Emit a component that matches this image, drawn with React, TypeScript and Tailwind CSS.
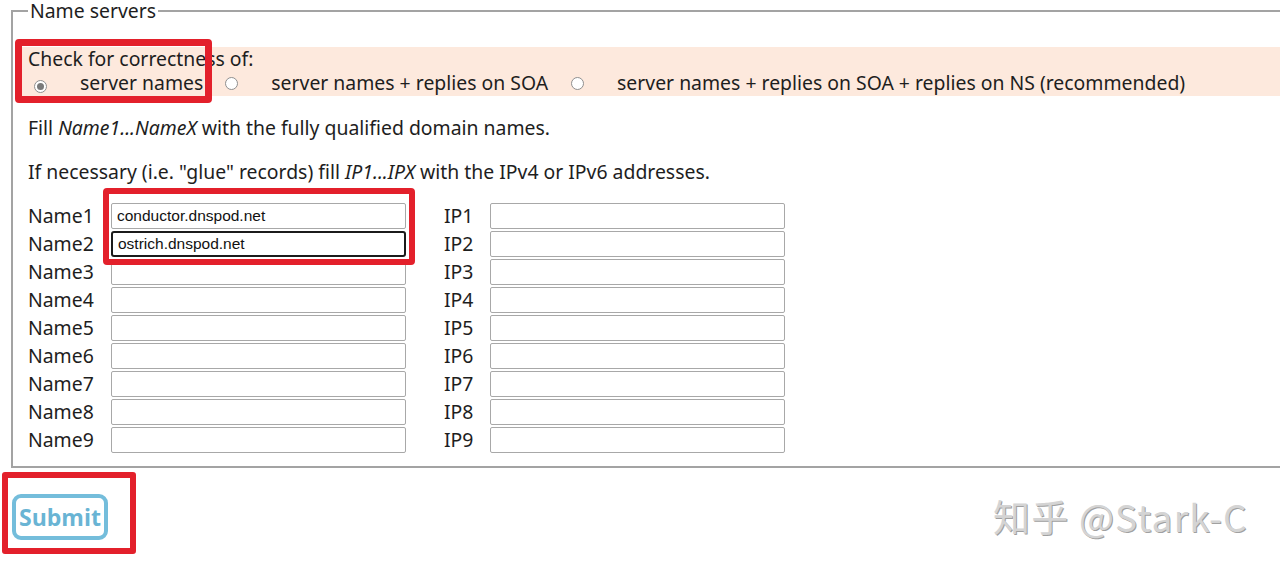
import React from 'react';

const rows = [1, 2, 3, 4, 5, 6, 7, 8, 9];
const values: Record<number, string> = { 1: 'conductor.dnspod.net', 2: 'ostrich.dnspod.net' };

const Radio = ({ checked = false }: { checked?: boolean }) => (
  <span className="inline-flex w-[13px] h-[13px] shrink-0 items-center justify-center rounded-full border border-[#8f8f8f] bg-white">
    {checked && <span className="w-[7px] h-[7px] rounded-full bg-[#7a7a7a]" />}
  </span>
);

const Field = ({ value = '', focused = false }: { value?: string; focused?: boolean }) => (
  <input
    readOnly
    value={value}
    className={`w-[295px] h-[26px] px-[5px] bg-white text-[15.5px] text-[#111] outline-none rounded-[2px] ${
      focused ? 'border-2 border-[#1b1b1b] rounded-[3px] px-[4px]' : 'border border-[#a8a8a8]'
    }`}
    style={{ fontFamily: '"Liberation Sans", Arial, sans-serif' }}
  />
);

export default function App() {
  return (
    <div
      className="relative w-[1280px] h-[567px] overflow-hidden bg-white text-[19.4px] text-[#1e1e1e]"
      style={{ fontFamily: '"Noto Sans", "Open Sans", sans-serif' }}
    >
      <fieldset className="ml-[11px] w-[1300px] border-2 border-[#a3a3a3] pl-[3px] pb-[12px]">
        <legend className="ml-[12px] px-[2px] leading-[22px]">Name servers</legend>

        <div className="mt-[25px] bg-[#fde9dd] pl-[12px] pb-[1px] leading-[24px]">
          <div>Check for correctness of:</div>
          <div className="flex items-center">
            <span className="ml-[6px]"><Radio checked /></span>
            <span className="ml-[33px]">server names</span>
            <span className="ml-[22px]"><Radio /></span>
            <span className="ml-[33px]">server names + replies on SOA</span>
            <span className="ml-[23px]"><Radio /></span>
            <span className="ml-[33px]">server names + replies on SOA + replies on NS (recommended)</span>
          </div>
        </div>

        <p className="mt-[20px] pl-[12px] leading-[24px]">
          Fill <i>Name1...NameX</i> with the fully qualified domain names.
        </p>
        <p className="mt-[20px] pl-[12px] leading-[24px]">
          If necessary (i.e. "glue" records) fill <i>IP1...IPX</i> with the IPv4 or IPv6 addresses.
        </p>

        <div className="mt-[18px] pl-[12px]">
          {rows.map((n) => (
            <div key={n} className="flex items-center h-[28px]">
              <span className="w-[83px]">Name{n}</span>
              <Field value={values[n]} focused={n === 2} />
              <span className="ml-[38px] w-[46px]">IP{n}</span>
              <Field />
            </div>
          ))}
        </div>
      </fieldset>

      <div className="mt-[26px] ml-[12px]">
        <button
          className="w-[96px] h-[46px] rounded-[9px] border-[4px] border-[#74bddb] bg-white text-[23px] font-bold text-[#69b4d4] leading-none"
          style={{ fontFamily: '"Open Sans", "Noto Sans", sans-serif' }}
        >
          Submit
        </button>
      </div>

      {/* annotation boxes */}
      <div className="absolute left-[15px] top-[39px] w-[197px] h-[64px] border-[7px] border-[#e3202b] rounded-[4px]" />
      <div className="absolute left-[103px] top-[188px] w-[312px] h-[77px] border-[6px] border-[#e3202b] rounded-[4px]" />
      <div className="absolute left-[2px] top-[472px] w-[134px] h-[82px] border-[6px] border-[#e3202b] rounded-[3px]" />

      <div
        className="absolute left-[993px] top-[493px] text-[37px] tracking-[1.2px] leading-[46px] text-[#d4d4d4] [text-shadow:1px_1px_0_#a0a0a0]"
        style={{ fontFamily: '"Noto Sans CJK SC", "Noto Sans", sans-serif' }}
      >
        知乎 @Stark-C
      </div>
    </div>
  );
}
